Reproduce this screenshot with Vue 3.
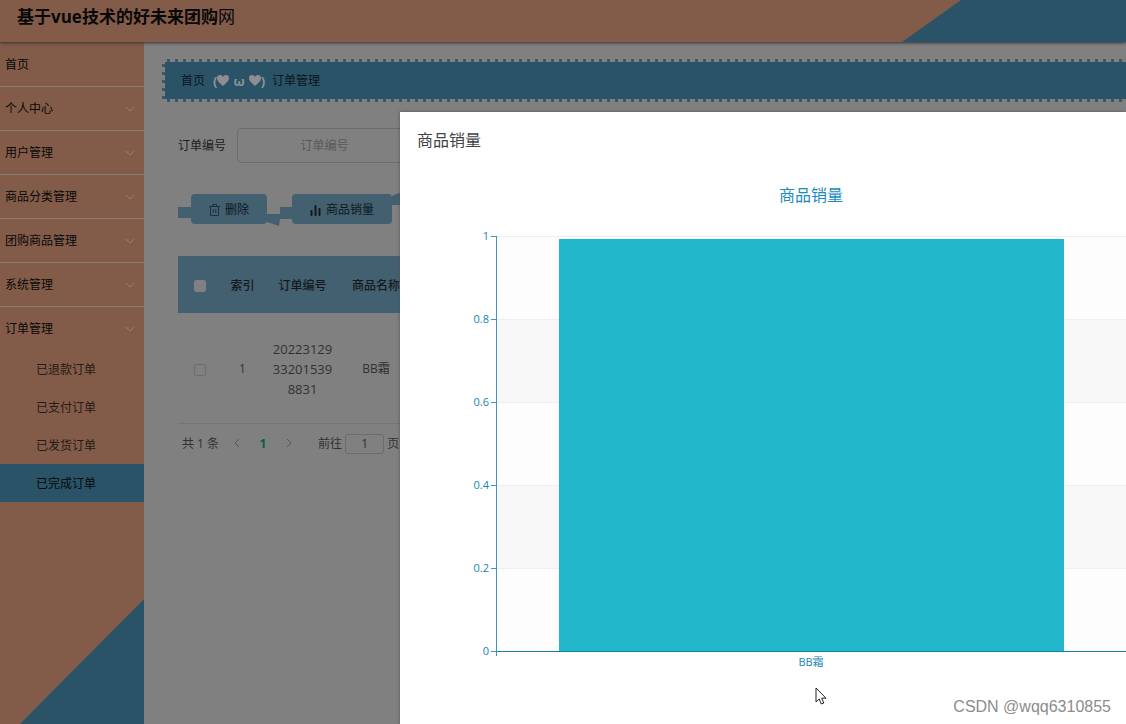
<script setup>
const menu = ['个人中心', '用户管理', '商品分类管理', '团购商品管理', '系统管理', '订单管理']
const orders = ['已退款订单', '已支付订单', '已发货订单', '已完成订单']
const ticks = ['1', '0.8', '0.6', '0.4', '0.2', '0']
</script>

<template>
  <div class="app">
    <header class="top">
      <h1>基于vue技术的好未来团购<span>网</span></h1>
      <svg class="corner" viewBox="0 0 224 42"><path d="M0 42L59 0H224V42z" /></svg>
    </header>
    <div class="body">
      <nav class="side">
        <a href="#" class="item">首页</a>
        <a v-for="m in menu" :key="m" href="#" class="item">
          {{ m }}
          <svg class="chev" width="10" height="6" viewBox="0 0 10 6"><path d="M1 1l4 4 4-4" /></svg>
        </a>
        <a v-for="(o, i) in orders" :key="o" href="#" class="sub" :class="{ active: i === 3 }">{{ o }}</a>
        <svg class="wedge" viewBox="0 0 124 125"><path d="M0 125L124 0V125z" /></svg>
      </nav>
      <main class="main">
        <div class="crumb">
          <a href="#">首页</a>
          <span class="face">
            <span>(</span>
            <svg width="12" height="11" viewBox="0 0 12 11"><path d="M6 11C3 8 0 6 0 3.200C0-.6 4.500-1 6 2C7.500-1 12-.6 12 3.200C12 6 9 8 6 11z" /></svg>
            <span class="omega">ω</span>
            <svg width="12" height="11" viewBox="0 0 12 11"><path d="M6 11C3 8 0 6 0 3.200C0-.6 4.500-1 6 2C7.500-1 12-.6 12 3.200C12 6 9 8 6 11z" /></svg>
            <span>)</span>
          </span>
          <span>订单管理</span>
        </div>
        <div class="search">
          <label for="order-no">订单编号</label>
          <input id="order-no" type="text" placeholder="订单编号">
        </div>
        <div class="tools">
          <svg width="13" height="34" viewBox="0 0 13 34"><path class="tail" d="M0 15h13v11H0z" /></svg>
          <button type="button" class="del">
            <svg width="11" height="12" viewBox="0 0 11 12"><path d="M0 2.500h11M3.500 2.500v-2h4v2M1.500 2.500v9h8v-9M4.200 5v4M6.800 5v4" fill="none" stroke="#20303a" /></svg>
            删除
          </button>
          <svg width="25" height="34" viewBox="0 0 25 34"><path class="tail" d="M0 22h13v-7h12v12H13l-1 7L0 30z" /></svg>
          <button type="button" class="sales">
            <svg width="11" height="11" viewBox="0 0 11 11"><path d="M1.500 6v4M5.500 1v9M9.500 4v6" fill="none" stroke="#101820" stroke-width="2" stroke-linecap="round" /></svg>
            商品销量
          </button>
          <svg width="12" height="34" viewBox="0 0 12 34"><path class="tail" d="M0 4l9-4v13H0z" /></svg>
        </div>
        <table>
          <colgroup><col class="c1"><col class="c1"><col class="c3"><col class="c4"></colgroup>
          <thead>
            <tr><th><input type="checkbox" aria-label="全选"></th><th>索引</th><th>订单编号</th><th>商品名称</th></tr>
          </thead>
          <tbody>
            <tr><td><input type="checkbox" aria-label="选择"></td><td>1</td><td class="no">20223129332015398831</td><td>BB霜</td></tr>
          </tbody>
        </table>
        <div class="pager">
          <span class="total">共 1 条</span>
          <button type="button" aria-label="上一页"><svg width="6" height="10" viewBox="0 0 6 10"><path d="M5 1L1 5l4 4" /></svg></button>
          <button type="button" class="cur">1</button>
          <button type="button" aria-label="下一页"><svg width="6" height="10" viewBox="0 0 6 10"><path d="M1 1l4 4-4 4" /></svg></button>
          <label class="go">前往 <input type="text" value="1"> 页</label>
        </div>
      </main>
    </div>
    <section class="dialog" role="dialog" aria-labelledby="dlg-title">
      <h2 id="dlg-title">商品销量</h2>
      <h3>商品销量</h3>
      <div class="chart">
        <div class="yaxis"><span v-for="t in ticks" :key="t">{{ t }}</span></div>
        <div class="plot">
          <div v-for="n in 5" :key="n" class="band"><i></i></div>
          <div class="bar"></div>
          <i class="xtick"></i>
        </div>
      </div>
      <p class="xlabel">BB霜</p>
    </section>
    <svg class="cursor" width="12" height="18" viewBox="0 0 12 18"><path d="M1 1V15L4.200 12L6.300 17L8.800 16L6.700 11.200H11z" fill="#fff" stroke="#222" /></svg>
    <div class="mark">CSDN @wqq6310855</div>
  </div>
</template>

<style>
body { margin: 0; background: #808080; }
</style>

<style scoped>
* { box-sizing: border-box; }
.app {
  position: relative;
  display: flex;
  flex-direction: column;
  min-height: 100vh;
  overflow: hidden;
  background: #808080;
  color: #1c1d1f;
  font: 12px/20px "Open Sans", "Noto Sans CJK SC", sans-serif;
}
a { color: inherit; text-decoration: none; }
button, input { font: inherit; color: inherit; margin: 0; }
h1, h2, h3, p { margin: 0; font-weight: 400; }
.top {
  position: relative;
  z-index: 1;
  display: flex;
  justify-content: space-between;
  height: 42px;
  background: #835c49;
  box-shadow: 0 1px 3px #333;
}
h1 { padding: 5px 17px; font-size: 17px; line-height: 24px; font-weight: 700; color: #080808; }
h1 span { font-weight: 400; }
.corner { width: 224px; height: 42px; }
.corner path, .wedge path { fill: #2a5368; }
.body { display: flex; flex: 1; }
.side { display: flex; flex-direction: column; width: 144px; padding-top: 1px; background: #835c49; color: #080808; }
.item {
  display: flex;
  align-items: center;
  justify-content: space-between;
  height: 44px;
  padding: 0 9px 0 5px;
  border-bottom: 1px solid #8b7b70;
}
.item:nth-child(7) { height: 43px; border-bottom: 0; }
.chev path { fill: none; stroke: #9a7c6c; }
.sub { height: 38px; padding-left: 36px; line-height: 40px; color: #241a16; }
.sub.active { background: #2a5368; color: #080808; }
.wedge { width: 124px; margin: auto 0 0 auto; }
.main { flex: 1; min-width: 0; padding: 17px 0 0 18px; }
.crumb {
  display: flex;
  align-items: center;
  height: 43px;
  padding-left: 19px;
  color: #0c1419;
  background:
    linear-gradient(#2a5368, #2a5368) 3px 3px / 100% 37px no-repeat,
    repeating-linear-gradient(90deg, #3b5866 0 3px, #808080 3px 8px) 5px 0 / 100% 3px no-repeat,
    repeating-linear-gradient(90deg, #3b5866 0 3px, #808080 3px 8px) 5px 100% / 100% 3px no-repeat,
    repeating-linear-gradient(#3b5866 0 3px, #808080 3px 8px) 0 5px / 3px 35px no-repeat;
}
.face { display: flex; align-items: center; margin: 0 7px 0 8px; color: #8f9296; font-weight: 700; font-size: 13px; }
.face svg { fill: #8f8d92; }
.omega { margin: 0 4px; }
.search { display: flex; align-items: center; gap: 11px; margin: 26px 0 0 16px; }
.search input {
  width: 175px;
  height: 35px;
  padding: 0;
  border: 1px solid #6c6d70;
  border-radius: 4px;
  background: transparent;
  text-align: center;
}
.search input::placeholder { color: #58595c; opacity: 1; }
.tools { display: flex; height: 34px; margin: 29px 0 0 16px; }
.tail { fill: #42606f; }
.tools button {
  display: flex;
  align-items: center;
  justify-content: center;
  gap: 5px;
  height: 30px;
  margin-top: 2px;
  padding: 2px 0 0;
  border: 0;
  border-radius: 4px;
  background: #42606f;
  color: #10181e;
}
.del { width: 76px; }
.sales { width: 100px; }
table { width: 233px; margin: 30px 0 0 16px; border-collapse: collapse; table-layout: fixed; }
.c1 { width: 43px; }
.c3 { width: 77px; }
.c4 { width: 70px; }
th, td { padding: 2px 0 0; text-align: center; }
th { height: 57px; background: #42606f; font-weight: 500; color: #15191c; }
td { height: 110px; border-bottom: 1px solid #747577; color: #303133; }
td.no { padding: 2px 8px 0; font-size: 13px; word-break: break-all; }
table input {
  appearance: none;
  width: 12px;
  height: 12px;
  border: 1px solid #6c6d70;
  border-radius: 2px;
  vertical-align: middle;
}
th input { border-color: #808080; background: #808080; }
.pager { display: flex; align-items: center; margin: 10px 0 0 20px; color: #303133; }
.total { width: 42px; }
.pager button { width: 26px; height: 20px; padding: 0; border: 0; background: none; }
.pager path { fill: none; stroke: #55575a; }
.pager .cur { color: #0b5a4e; font-weight: 700; }
.go { margin-left: 16px; white-space: nowrap; }
.go input {
  width: 39px;
  height: 20px;
  padding: 0;
  border: 1px solid #6c6d70;
  border-radius: 3px;
  background: transparent;
  text-align: center;
}
.dialog {
  position: absolute;
  z-index: 2;
  inset: 112px 0 0 400px;
  background: #fff;
  box-shadow: 0 0 3px #555;
}
h2 { padding: 16px 17px 0; font-size: 16px; line-height: 24px; color: #414346; }
h3 { margin: 31px 0 0 96px; font-size: 16px; line-height: 24px; color: #1a8bc0; text-align: center; }
.chart { display: flex; margin-top: 29px; }
.yaxis { width: 96px; padding-right: 7px; color: #1a82b4; font-size: 11px; text-align: right; }
.yaxis span { display: block; height: 83px; line-height: 0; }
.yaxis span:last-child { height: 0; }
.plot { position: relative; flex: 1; border-left: 1px solid #3f96bd; border-bottom: 1px solid #197fa8; }
.band { height: 83px; border-top: 1px solid #eee; background: #fdfdfd; }
.band:nth-child(even) { background: #f8f8f8; }
.band i { display: block; width: 6px; height: 1px; margin: -1px 0 0 -6px; background: #3f96bd; }
.bar { position: absolute; inset: 3px 10% 0; margin: 0 -1px; background: #23b7cb; }
.xtick { position: absolute; left: -6px; top: 100%; width: 6px; height: 5px; border-top: 1px solid #3f96bd; border-right: 1px solid #3f96bd; }
.xlabel { margin-left: 96px; font-size: 11px; color: #1a82b4; text-align: center; }
.cursor { position: absolute; z-index: 3; left: 815px; top: 687px; }
.mark {
  position: absolute;
  z-index: 3;
  right: 15px;
  bottom: 7px;
  color: #8c8c8c;
  font: 16px/20px "Liberation Sans", sans-serif;
}
</style>
